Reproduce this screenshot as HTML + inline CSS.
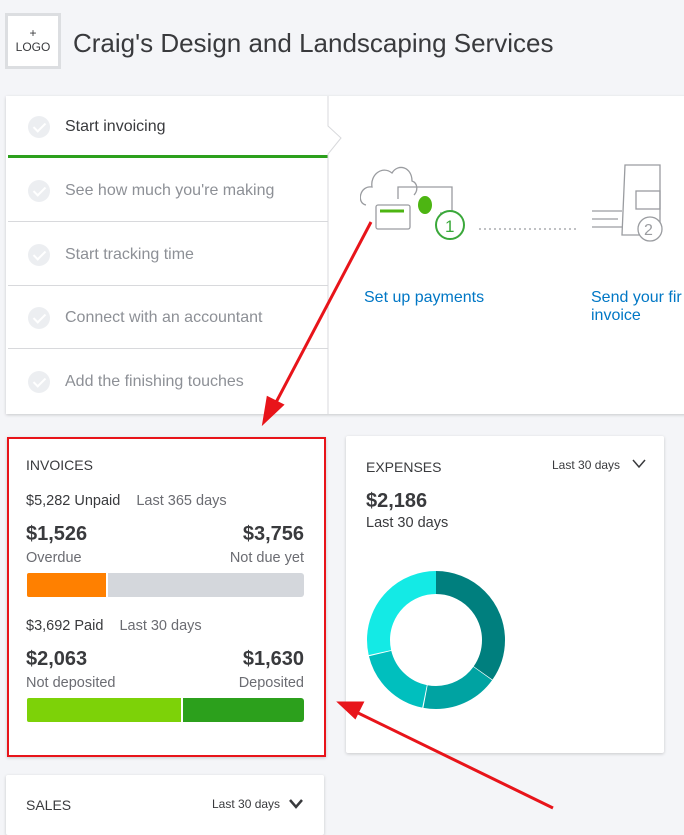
<!DOCTYPE html>
<html><head><meta charset="utf-8"><style>
*{box-sizing:border-box;margin:0;padding:0}
body{width:684px;height:821px;overflow:hidden;background:#f4f5f8;font-family:"Liberation Sans",sans-serif;position:relative;color:#393a3d}
.abs{position:absolute}
.r{text-align:right}
.card{position:absolute;background:#fff;box-shadow:0 1px 3px rgba(0,0,0,.18)}
.row{position:absolute;left:8px;width:320px;height:62px;border-bottom:1px solid #d8d9dc;font-size:16px;color:#8d9096}
.row .ck{position:absolute;left:20px;top:20px;width:22px;height:22px;border-radius:50%;background:#eceef1}
.row .ck:after{content:"";position:absolute;left:8px;top:4px;width:5px;height:10px;border:solid #fff;border-width:0 2px 2px 0;transform:rotate(45deg)}
.row span{position:absolute;left:57px;top:22px}
.big{font-weight:bold;font-size:20px;color:#393a3d}
.sm{font-size:14.5px;color:#6b6c72}
</style></head><body>
<div class="abs" style="left:5px;top:13px;width:56px;height:56px;border:3px solid #dcdee1;background:#fff;text-align:center;font-size:12px;color:#393a3d;line-height:14px;padding-top:10px">+<br>LOGO</div>
<div class="abs" style="left:73px;top:28px;font-size:26px;color:#393a3d;white-space:nowrap">Craig's Design and Landscaping Services</div>

<div class="card" style="left:6px;top:96px;width:690px;height:318px"></div>
<div class="abs" style="left:8px;top:155px;width:320px;height:3px;background:#2ca01c"></div>
<div class="row" style="top:96px;border:none;color:#393a3d"><div class="ck"></div><span>Start invoicing</span></div>
<div class="row" style="top:160px"><div class="ck"></div><span>See how much you're making</span></div>
<div class="row" style="top:224px"><div class="ck"></div><span>Start tracking time</span></div>
<div class="row" style="top:287px"><div class="ck"></div><span>Connect with an accountant</span></div>
<div class="row" style="top:351px;border:none"><div class="ck"></div><span>Add the finishing touches</span></div>
<svg class="abs" style="left:320px;top:96px" width="30" height="318"><path d="M8 0 V30 L21 42 L8 58 V318" fill="#fff" stroke="#d8d9dc"/></svg>

<svg class="abs" style="left:360px;top:155px" width="324" height="90" fill="none" stroke="#9a9ca0" stroke-width="1.3">
<path d="M6 50 C-4 48 0 30 12 32 C10 20 22 10 32 18 C38 8 52 12 52 26 C58 28 58 36 54 40"/>
<path d="M38 44 V32 H92 V58 H80"/>
<rect x="16" y="50" width="34" height="24" rx="2"/>
<path d="M20 56 H44" stroke="#4db512" stroke-width="3"/>
<ellipse cx="65" cy="50" rx="7" ry="9" fill="#4db512" stroke="none"/>
<circle cx="90" cy="70" r="14" stroke="#3aa83a" stroke-width="2" fill="#fff"/>
<text x="85" y="77" font-size="17" fill="#3aa83a" stroke="none" font-family="Liberation Sans">1</text>
<path d="M119 74 H218" stroke-dasharray="2 3"/>
<path d="M232 56 H262 M232 64 H258 M232 72 H262"/>
<path d="M265 10 H300 V80 H262 Z"/><circle cx="290" cy="74" r="12" fill="#fff"/>
<text x="284" y="80" font-size="16" fill="#9a9ca0" stroke="none" font-family="Liberation Sans">2</text>
<rect x="276" y="36" width="24" height="18"/>
</svg>
<div class="abs" style="left:364px;top:289px;font-size:16px;color:#0077c5">Set up payments</div>
<div class="abs" style="left:591px;top:289px;font-size:16px;color:#0077c5;line-height:18px;white-space:nowrap">Send your fir<br>invoice</div>

<div class="card" style="left:7px;top:437px;width:319px;height:320px;border:2px solid #e8141a"></div>
<div class="abs" style="left:26px;top:457px;font-size:14px">INVOICES</div>
<div class="abs" style="left:26px;top:493px;font-size:14.5px">$5,282 Unpaid <span style="margin-left:12px;color:#6b6c72">Last 365 days</span></div>
<div class="abs big" style="left:26px;top:523px">$1,526</div>
<div class="abs big r" style="right:380px;top:523px">$3,756</div>
<div class="abs sm" style="left:26px;top:550px">Overdue</div>
<div class="abs sm r" style="right:380px;top:550px">Not due yet</div>
<div class="abs" style="left:27px;top:573px;width:79px;height:24px;background:#ff8000;border-radius:2px 0 0 2px"></div>
<div class="abs" style="left:108px;top:573px;width:196px;height:24px;background:#d4d7dc;border-radius:0 3px 3px 0"></div>
<div class="abs" style="left:26px;top:618px;font-size:14.5px">$3,692 Paid <span style="margin-left:12px;color:#6b6c72">Last 30 days</span></div>
<div class="abs big" style="left:26px;top:648px">$2,063</div>
<div class="abs big r" style="right:380px;top:648px">$1,630</div>
<div class="abs sm" style="left:26px;top:675px">Not deposited</div>
<div class="abs sm r" style="right:380px;top:675px">Deposited</div>
<div class="abs" style="left:27px;top:698px;width:154px;height:24px;background:#7dd208;border-radius:2px 0 0 2px"></div>
<div class="abs" style="left:183px;top:698px;width:121px;height:24px;background:#2ca01c;border-radius:0 3px 3px 0"></div>

<div class="card" style="left:346px;top:436px;width:318px;height:317px;border-radius:2px"></div>
<div class="abs" style="left:366px;top:459px;font-size:14px">EXPENSES</div>
<div class="abs" style="left:552px;top:458px;font-size:12px">Last 30 days</div>
<svg class="abs" style="left:632px;top:459px" width="14" height="10"><path d="M1 1 L7 8 L13 1" fill="none" stroke="#393a3d" stroke-width="1.5"/></svg>
<div class="abs big" style="left:366px;top:490px">$2,186</div>
<div class="abs sm" style="left:366px;top:515px;color:#393a3d">Last 30 days</div>
<svg class="abs" style="left:366px;top:570px" width="140" height="140">
<g transform="rotate(-90 70 70)" fill="none" stroke-width="23">
<circle cx="70" cy="70" r="57.5" stroke="#007f7e" stroke-dasharray="125.4 400"/>
<circle cx="70" cy="70" r="57.5" stroke="#00a3a2" stroke-dasharray="0 126 65 400"/>
<circle cx="70" cy="70" r="57.5" stroke="#00bfbe" stroke-dasharray="0 192 65 400"/>
<circle cx="70" cy="70" r="57.5" stroke="#14eae5" stroke-dasharray="0 258 104 400"/>
</g></svg>

<div class="card" style="left:6px;top:775px;width:318px;height:60px;border-radius:2px"></div>
<div class="abs" style="left:26px;top:797px;font-size:14px">SALES</div>
<div class="abs" style="left:212px;top:797px;font-size:12px">Last 30 days</div>
<svg class="abs" style="left:289px;top:799px" width="14" height="10"><path d="M1 1 L7 8 L13 1" fill="none" stroke="#393a3d" stroke-width="2.5"/></svg>

<svg class="abs" style="left:0;top:0" width="684" height="821">
<g stroke="#e8141a" stroke-width="3" fill="#e8141a">
<path d="M371 222 L272 410"/><path d="M264 422 L268 398 L282 405 Z"/>
<path d="M553 808 L352 710"/><path d="M340 703 L362 703 L355 717 Z"/>
</g></svg>
</body></html>
